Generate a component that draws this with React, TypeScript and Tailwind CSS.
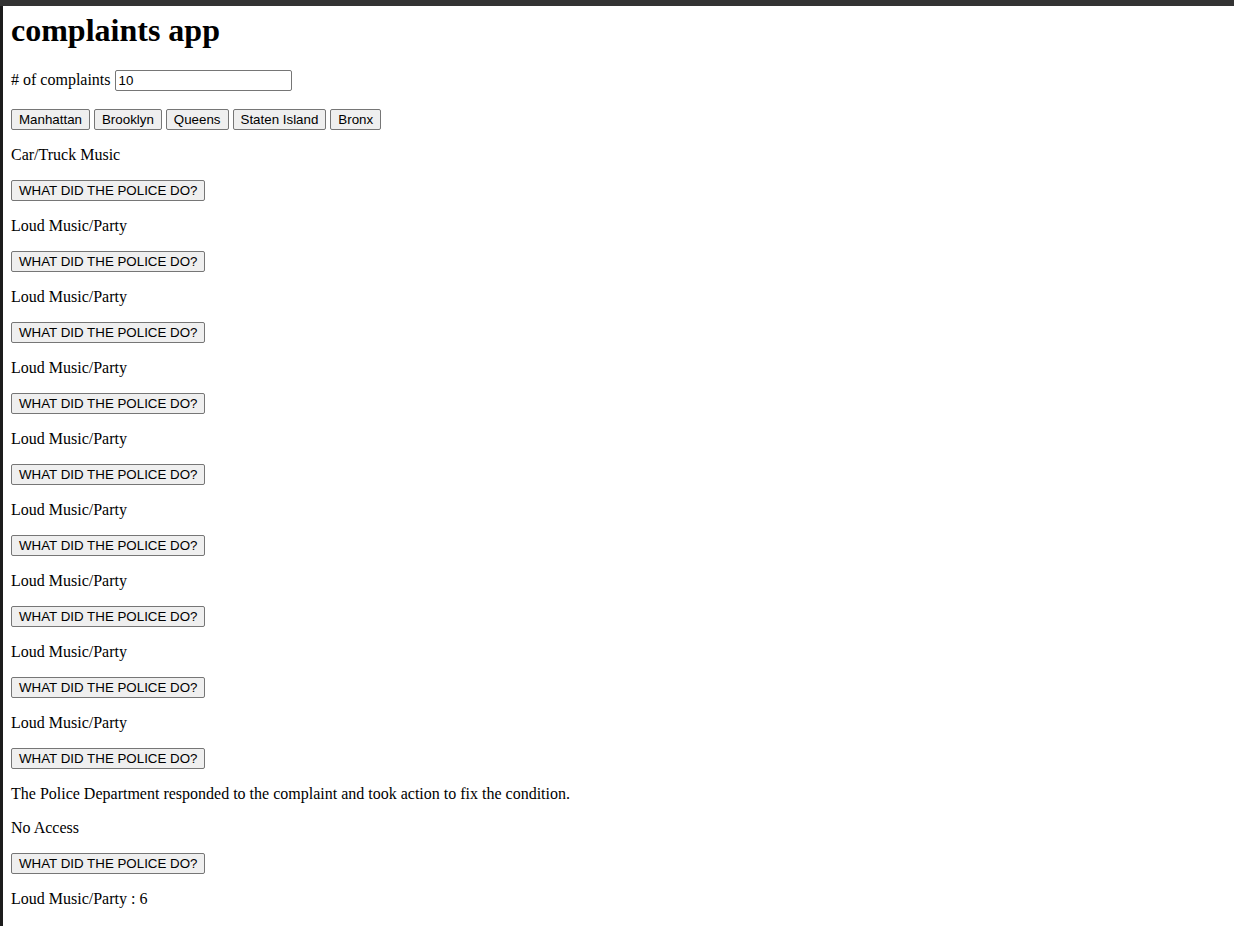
const boroughs = ["Manhattan", "Brooklyn", "Queens", "Staten Island", "Bronx"];

const complaints = [
  "Car/Truck Music",
  "Loud Music/Party",
  "Loud Music/Party",
  "Loud Music/Party",
  "Loud Music/Party",
  "Loud Music/Party",
  "Loud Music/Party",
  "Loud Music/Party",
  "Loud Music/Party",
];

function NativeButton({ children }: { children: React.ReactNode }) {
  return (
    <button className="h-[21px] px-[7px] border border-[#767676] rounded-[2px] bg-[#efefef] text-black text-[13.33px] leading-[15px] font-['Liberation_Sans',Arial,sans-serif] whitespace-nowrap">
      {children}
    </button>
  );
}

function Line({ children }: { children: React.ReactNode }) {
  return <p className="mt-4 leading-[18px] text-[16px]">{children}</p>;
}

function ButtonRow({ children }: { children: React.ReactNode }) {
  return <div className="mt-4 flex h-[21px]">{children}</div>;
}

export default function App() {
  return (
    <div className="min-h-[926px] bg-white text-black font-['Liberation_Serif','Times_New_Roman',serif]">
      <div className="h-[6px] bg-[#333333]" />
      <div className="min-h-[920px] border-l-[3px] border-[#1c1c1c] pl-[8px] pt-[6px] pb-4 flex flex-col items-start">
        <h1 className="text-[32px] leading-[37px] font-bold">complaints app</h1>

        <div className="mt-[19px] flex items-baseline text-[16px] h-[21px]">
          <span># of complaints&nbsp;</span>
          <input
            defaultValue="10"
            className="w-[177px] h-[21px] border border-[#767676] rounded-[2px] px-[3px] text-[13.33px] font-['Liberation_Sans',Arial,sans-serif] text-black outline-none"
          />
        </div>

        <div className="mt-[20px] flex gap-[4px] h-[21px]">
          {boroughs.map((b) => (
            <NativeButton key={b}>{b}</NativeButton>
          ))}
        </div>

        {complaints.map((c, i) => (
          <div key={i} className="flex flex-col items-start">
            <Line>{c}</Line>
            <ButtonRow>
              <NativeButton>WHAT DID THE POLICE DO?</NativeButton>
            </ButtonRow>
          </div>
        ))}

        <Line>The Police Department responded to the complaint and took action to fix the condition.</Line>
        <Line>No Access</Line>
        <ButtonRow>
          <NativeButton>WHAT DID THE POLICE DO?</NativeButton>
        </ButtonRow>
        <Line>Loud Music/Party : 6</Line>
      </div>
    </div>
  );
}
